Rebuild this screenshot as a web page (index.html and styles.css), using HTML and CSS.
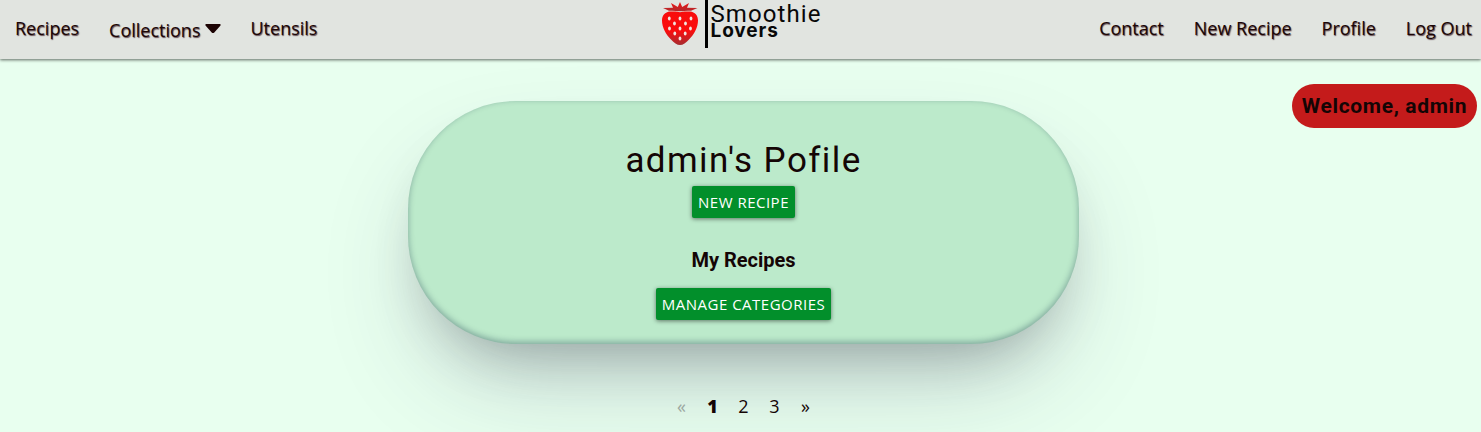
FILE: index.html
```html
<!DOCTYPE html>
<html lang="en">
<head>
<meta charset="utf-8">
<title>Smoothie Lovers</title>
<link rel="stylesheet" href="styles.css">
</head>
<body>
<header class="navbar">
  <nav class="nav-links nav-left">
    <a class="nav-link">Recipes</a>
    <a class="nav-link nav-dropdown">Collections
      <svg class="caret" width="16" height="10" viewBox="0 0 16 10"><path d="M1.200 0h13.600q1.400.4.5 1.700L9.300 8.400Q8 9.800 6.700 8.400L.7 1.700Q-.2.4 1.200 0z"/></svg>
    </a>
    <a class="nav-link">Utensils</a>
  </nav>
  <a class="logo">
    <svg class="berry" width="38" height="45" viewBox="0 0 38 45">
      <defs>
        <linearGradient id="fruit" x1="0" y1="0" x2="0" y2="1"><stop offset="0" stop-color="#f80c0c"/><stop offset=".58" stop-color="#fa0d0d"/><stop offset="1" stop-color="#a52d31"/></linearGradient>
        <linearGradient id="leaf" x1="0" y1="0" x2="0" y2="1"><stop offset="0" stop-color="#f51212"/><stop offset="1" stop-color="#ad2b2e"/></linearGradient>
      </defs>
      <path fill="url(#leaf)" d="M19 2l2.200 5L28 3l-2 4.800 10.500.2-6.500 2.800Q25 10.500 19 11.200 13 10.500 8 10.800L2 8l10-.2L10 3l6.800 4z"/>
      <path fill="url(#fruit)" d="M9 11.500c4 .2 7-.2 10 .8 3-1 6-.6 10-.8 5 .5 8 4 8 9 0 7-4 14-9 19-3 3.500-6 5.500-9 5.500s-6-2-9-5.500C5 34.500 1 27.500 1 20.500c0-5 3-8.500 8-9z"/>
      <g fill="#f1e5df">
        <ellipse cx="8.300" cy="18.500" rx="1.400" ry="2"/><ellipse cx="19" cy="18.500" rx="1.400" ry="2"/><ellipse cx="30" cy="18.500" rx="1.400" ry="2"/>
        <ellipse cx="13.500" cy="23.500" rx="1.400" ry="2"/><ellipse cx="24.500" cy="23.500" rx="1.400" ry="2"/>
        <ellipse cx="8.500" cy="28.500" rx="1.400" ry="2"/><ellipse cx="19" cy="28.500" rx="1.400" ry="2"/><ellipse cx="29.500" cy="28.500" rx="1.400" ry="2"/>
        <ellipse cx="13.800" cy="33.500" rx="1.400" ry="2"/><ellipse cx="24.200" cy="33.500" rx="1.400" ry="2"/>
        <ellipse cx="19" cy="38.500" rx="1.400" ry="2"/>
      </g>
    </svg>
    <span class="logo-bar"></span>
    <span class="logo-text"><span class="logo-top">Smoothie</span><span class="logo-bottom">Lovers</span></span>
  </a>
  <nav class="nav-links nav-right">
    <a class="nav-link">Contact</a>
    <a class="nav-link">New Recipe</a>
    <a class="nav-link">Profile</a>
    <a class="nav-link">Log Out</a>
  </nav>
</header>
<div class="welcome">Welcome, admin</div>
<main class="content">
  <section class="card">
    <h1 class="title">admin's Pofile</h1>
    <a class="btn btn-new">New Recipe</a>
    <h2 class="subtitle">My Recipes</h2>
    <a class="btn btn-manage">Manage Categories</a>
  </section>
  <nav class="pagination">
    <span class="page disabled">«</span><span class="page current">1</span><span class="page">2</span><span class="page">3</span><span class="page">»</span>
  </nav>
</main>
</body>
</html>
```
FILE: styles.css
```css
* { box-sizing: border-box; }
body {
  margin: 0;
  height: 432px;
  overflow: hidden;
  position: relative;
  background: #e8ffef;
  color: #140505;
  font-family: "Open Sans", sans-serif;
}
.navbar {
  height: 59px;
  display: grid;
  grid-template-columns: 1fr 162px 1fr;
  background: #e1e4e0;
  box-shadow: 0 1px 3px rgba(0, 0, 0, .6);
  position: relative;
}
.nav-links { display: flex; gap: 30px; padding-top: 16px; }
.nav-left { padding-left: 15px; }
.nav-right { justify-content: flex-end; padding-right: 9px; }
.nav-link {
  font-size: 18px;
  line-height: 24px;
  white-space: nowrap;
  color: #1c0606;
  text-shadow: .7px .7px 1px rgba(40, 5, 15, .7);
}
.nav-dropdown { padding-top: 2px; display: flex; gap: 5px; margin-right: -1px; }
.caret { margin-top: 6px; fill: #1c0303; }
.logo { display: flex; height: 48px; padding-left: 1px; }
.berry { flex: none; }
.logo-bar { width: 3px; height: 48px; margin-left: 6px; background: #000; flex: none; }
.logo-text { display: flex; flex-direction: column; padding: 4px 0 0 3px; color: #080808; }
.logo-top { font: 24px/21px Roboto, sans-serif; letter-spacing: 1.1px; }
.logo-bottom { font: 700 19px/11px Inter, sans-serif; letter-spacing: .9px; }
.welcome {
  position: absolute;
  top: 84px;
  right: 4px;
  width: 185px;
  height: 44px;
  border-radius: 22px;
  background: #c41b1b;
  font: 700 21px/44px Roboto, sans-serif;
  letter-spacing: .65px;
  text-align: center;
  white-space: nowrap;
}
.content { display: flex; flex-direction: column; align-items: center; padding: 42px 0 0 6px; }
.card {
  width: 671px;
  height: 243px;
  padding-top: 38px;
  display: flex;
  flex-direction: column;
  align-items: center;
  border-radius: 108px;
  background: #bceacb;
  box-shadow: rgba(50, 50, 93, .25) 0 50px 100px -20px, rgba(0, 0, 0, .3) 0 30px 60px -30px, rgba(10, 37, 64, .35) 0 -2px 6px 0 inset;
}
.title { margin: 0; font: 400 35px/44px Roboto, sans-serif; letter-spacing: 1.4px; }
.btn {
  height: 32px;
  margin-top: 3px;
  border-radius: 2px;
  background: #028f2b;
  color: #fff;
  font-size: 15px;
  line-height: 33px;
  letter-spacing: .5px;
  text-align: center;
  text-transform: uppercase;
  white-space: nowrap;
  box-shadow: 0 1px 4px rgba(0, 0, 0, .5);
}
.btn-new { width: 103px; }
.btn-manage { width: 175px; margin-top: 14px; }
.subtitle { margin: 28px 0 0; font: 700 20px/28px Roboto, sans-serif; }
.pagination { display: flex; margin-top: 50px; font-size: 18px; line-height: 25px; }
.page { width: 31px; text-align: center; }
.current { font-weight: 800; }
.disabled { color: #9ca8a1; }
```
